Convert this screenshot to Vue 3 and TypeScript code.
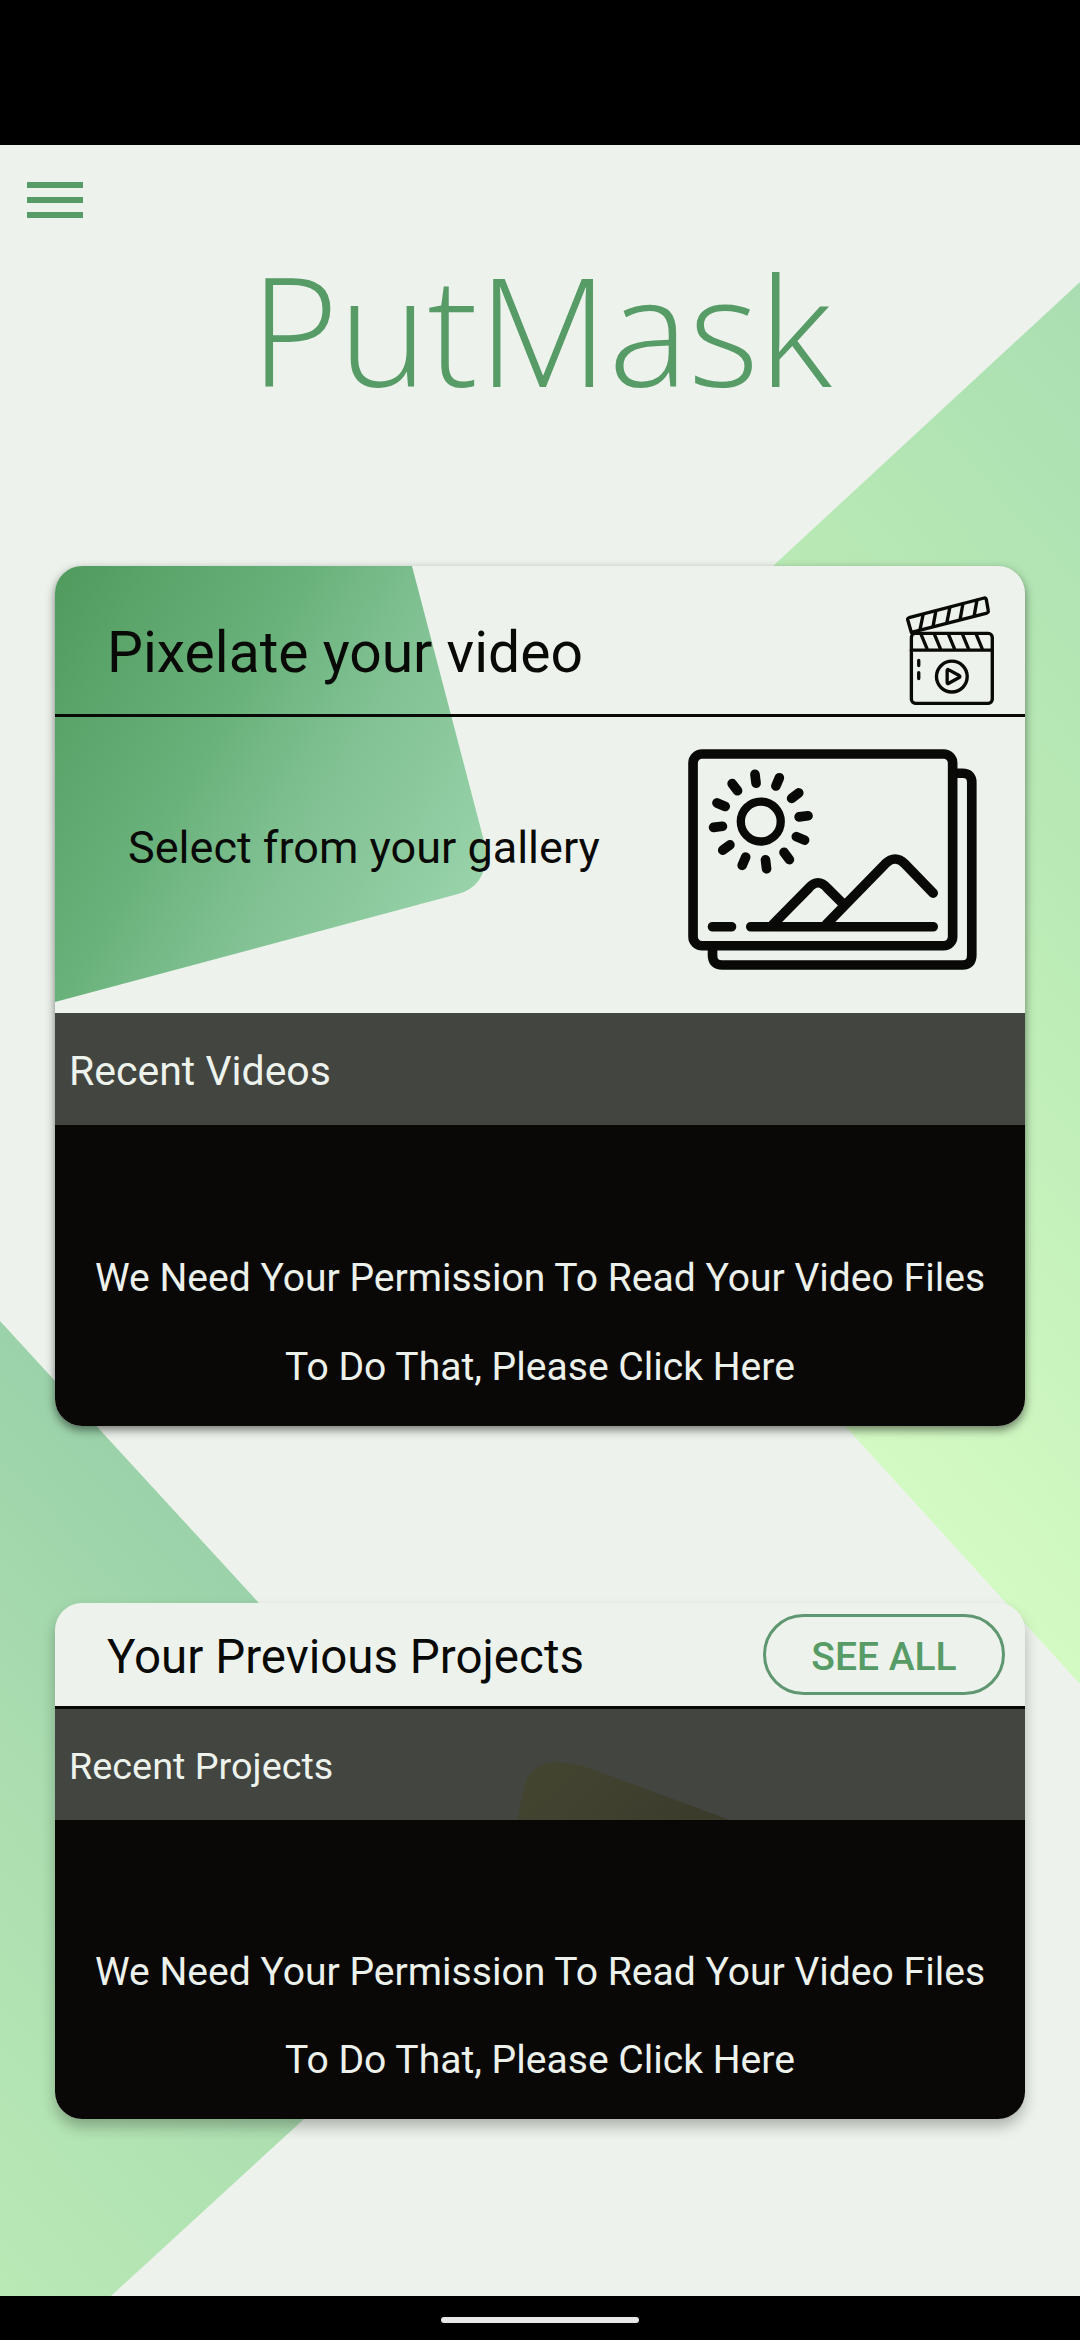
<script setup lang="ts">
const permissionLines: string[] = [
  'We Need Your Permission To Read Your Video Files',
  'To Do That, Please Click Here',
]

// Each ray is a short capsule placed around the sun's centre.
const rays: number[] = Array.from({ length: 12 }, (_, i) => i * 30 - 7)
</script>

<template>
  <div class="screen">
    <div class="status-bar"></div>

    <main class="home">
      <svg class="backdrop" viewBox="0 145 1080 2151" aria-hidden="true">
        <defs>
          <linearGradient id="bgRight" gradientUnits="userSpaceOnUse" x1="1080" y1="282" x2="380" y2="921">
            <stop offset="0" stop-color="#aadeb2" />
            <stop offset="0.43" stop-color="#b9eab5" />
            <stop offset="1" stop-color="#d4fac3" />
          </linearGradient>
          <linearGradient id="bgLeft" gradientUnits="userSpaceOnUse" x1="0" y1="1321" x2="-483" y2="1764">
            <stop offset="0" stop-color="#9bd2a9" />
            <stop offset="0.45" stop-color="#abddb0" />
            <stop offset="1" stop-color="#b9e9b5" />
          </linearGradient>
        </defs>
        <path d="M1080 282 774 565 600 1157 845 1426 1080 1684Z" fill="url(#bgRight)" />
        <path d="M0 1321 258 1602 500 1940 304 2119 111 2296H0Z" fill="url(#bgLeft)" />
      </svg>

      <button class="menu" aria-label="Menu">
        <span></span><span></span><span></span>
      </button>

      <h1 class="brand">PutMask</h1>

      <section class="card card-video">
        <svg class="card-shape" viewBox="0 0 441 438" aria-hidden="true">
          <defs>
            <linearGradient id="cardGreen" gradientUnits="userSpaceOnUse" x1="0" y1="0" x2="468" y2="270">
              <stop offset="0" stop-color="#519a5e" />
              <stop offset="0.4" stop-color="#68b17a" />
              <stop offset="0.6" stop-color="#7ebf90" />
              <stop offset="1" stop-color="#9ad4ab" />
            </linearGradient>
          </defs>
          <path d="M0 0H357L429 275Q437 318 403 328L0 436Z" fill="url(#cardGreen)" />
        </svg>

        <header class="video-head">
          <h2>Pixelate your video</h2>
          <svg class="clapper" viewBox="79 107 263 326" fill="none" stroke="#090a07" stroke-width="10" stroke-linejoin="round" stroke-linecap="round" aria-hidden="true">
            <rect x="95" y="219" width="242" height="209" rx="12" />
            <path d="M95 269H338" />
            <path d="M95 216 84 178 Q83 174 88 172L313 113Q318 112 319 117L325 151Q326 156 321 158L95 216" />
            <path d="M130 163 121 207M168 153 160 197M210 142 201 187M249 131 241 176M291 120 283 165" />
            <path d="M124 222 142 265M164 222 182 265M206 222 224 265M248 222 266 265M289 222 307 265" />
            <path d="M117 300V315M117 336V354" />
            <circle cx="216" cy="348" r="46" />
            <path d="M202 330Q202 325 207 328L238 345Q242 348 238 351L207 368Q202 371 202 366Z" />
          </svg>
        </header>

        <div class="video-body">
          <p>Select from your gallery</p>
          <svg class="gallery" viewBox="84 86 867 664" fill="none" stroke="#090a07" stroke-width="29" stroke-linecap="round" aria-hidden="true">
            <path d="M890 159H908Q936 159 936 187V705Q936 735 908 735H186Q157 735 157 705V690" stroke-linecap="butt" />
            <rect x="98.500" y="101" width="780" height="576" rx="27" />
            <circle cx="302" cy="304" r="60" stroke-width="25" />
            <path v-for="angle in rays" :key="angle" d="M302 188V161" :transform="`rotate(${angle} 302 304)`" />
            <path d="M157 620H214M272 620H820" />
            <path d="M338 614 446 504Q474 472 502 504L548 550M498 614 676 431Q706 402 735 431L820 519" />
          </svg>
        </div>

        <div class="band band-video">Recent Videos</div>
        <div class="permission permission-video">
          <p v-for="line in permissionLines" :key="line">{{ line }}</p>
        </div>
      </section>

      <section class="card card-projects">
        <header class="projects-head">
          <h2>Your Previous Projects</h2>
          <button class="see-all">SEE ALL</button>
        </header>

        <div class="band band-projects">
          <svg class="band-shape" viewBox="0 0 215 60" aria-hidden="true">
            <defs>
              <linearGradient id="bandOlive" x1="0" y1="0" x2="1" y2="0.3">
                <stop offset="0" stop-color="#454631" />
                <stop offset="1" stop-color="#3b3c2c" />
              </linearGradient>
            </defs>
            <path d="M0 60 7 27Q13 2 40 2Q57 2 75 9L213 60Z" fill="url(#bandOlive)" />
          </svg>
          <span>Recent Projects</span>
        </div>
        <div class="permission permission-projects">
          <p v-for="line in permissionLines" :key="line">{{ line }}</p>
        </div>
      </section>
    </main>

    <footer class="nav-bar"><span></span></footer>
  </div>
</template>

<style>
body {
  margin: 0;
  background: #000;
}
</style>

<style scoped>
.screen {
  display: flex;
  flex-direction: column;
  width: 1080px;
  height: 2340px;
  overflow: hidden;
  background: #000;
  color: #090a07;
  font-family: Roboto, 'Liberation Sans', sans-serif;
}
h1,
h2,
p {
  margin: 0;
  font-weight: 400;
  white-space: nowrap;
}
button {
  padding: 0;
  border: 0;
  background: none;
  font-family: inherit;
}
.status-bar {
  flex: none;
  height: 145px;
}
.home {
  position: relative;
  flex: none;
  height: 2151px;
  overflow: hidden;
  background: #edf3ec;
}
.backdrop {
  position: absolute;
  inset: 0;
  width: 1080px;
  height: 2151px;
}
.menu {
  position: relative;
  display: flex;
  flex-direction: column;
  gap: 9px;
  width: 56px;
  margin: 37px 0 0 27px;
}
.menu span {
  height: 6px;
  background: #579b67;
}
.brand {
  position: relative;
  margin-top: 36px;
  height: 150px;
  padding-left: 2px;
  color: #579b67;
  font-family: 'Open Sans', sans-serif;
  font-size: 151px;
  font-weight: 300;
  line-height: 150px;
  text-align: center;
}
.card {
  position: relative;
  width: 970px;
  margin-left: 55px;
  border-radius: 27px;
  background: #edf3ec;
}
.card-video {
  margin-top: 162px;
  box-shadow: 0 4px 10px rgba(0, 0, 0, 0.5);
}
.card-projects {
  margin-top: 177px;
  box-shadow: 0 8px 14px rgba(0, 0, 0, 0.26);
}
.card-shape {
  position: absolute;
  left: 0;
  top: 0;
  width: 441px;
  height: 438px;
  border-top-left-radius: 27px;
}
.video-head {
  position: relative;
  display: flex;
  justify-content: space-between;
  height: 148px;
  padding: 0 31px 0 52px;
  border-bottom: 3px solid #090a07;
}
.video-head h2 {
  margin-top: 57px;
  font-size: 57px;
  line-height: 60px;
}
.clapper {
  width: 88px;
  height: 109px;
  margin-top: 30px;
}
.video-body {
  position: relative;
  display: flex;
  justify-content: space-between;
  height: 296px;
  padding: 0 48px 0 73px;
}
.video-body p {
  margin-top: 101px;
  font-size: 45px;
  line-height: 60px;
}
.gallery {
  width: 289px;
  height: 221px;
  margin-top: 32px;
}
.band {
  position: relative;
  box-sizing: border-box;
  padding-left: 14px;
  background: #434541;
  color: #edf3ec;
}
.band-video {
  height: 112px;
  padding-top: 4px;
  font-size: 41px;
  line-height: 108px;
}
.band-projects {
  height: 111px;
  padding-top: 4px;
  font-size: 37.8px;
  line-height: 107px;
}
.band-projects span {
  position: relative;
}
.band-shape {
  position: absolute;
  left: 462px;
  bottom: 0;
  width: 215px;
  height: 60px;
}
.permission {
  box-sizing: border-box;
  border-radius: 0 0 27px 27px;
  background: #090806;
  color: #edf1ec;
  font-size: 39.1px;
  text-align: center;
}
.permission-video {
  height: 301px;
  padding-top: 109px;
  line-height: 89px;
}
.permission-projects {
  height: 299px;
  padding-top: 108px;
  line-height: 88px;
}
.projects-head {
  display: flex;
  justify-content: space-between;
  height: 103px;
  padding: 0 20px 0 52px;
  border-bottom: 3px solid #090a07;
}
.projects-head h2 {
  margin-top: 24px;
  font-size: 47.5px;
  line-height: 60px;
}
.see-all {
  box-sizing: border-box;
  width: 242px;
  height: 81px;
  margin-top: 11px;
  padding-top: 5px;
  border: 3px solid #5f9770;
  border-radius: 41px;
  color: #579b67;
  font-size: 39px;
  font-weight: 500;
  line-height: 70px;
}
.nav-bar {
  display: flex;
  justify-content: center;
  height: 44px;
}
.nav-bar span {
  width: 198px;
  height: 6px;
  margin-top: 21px;
  border-radius: 3px;
  background: #e8e8e8;
}
</style>
